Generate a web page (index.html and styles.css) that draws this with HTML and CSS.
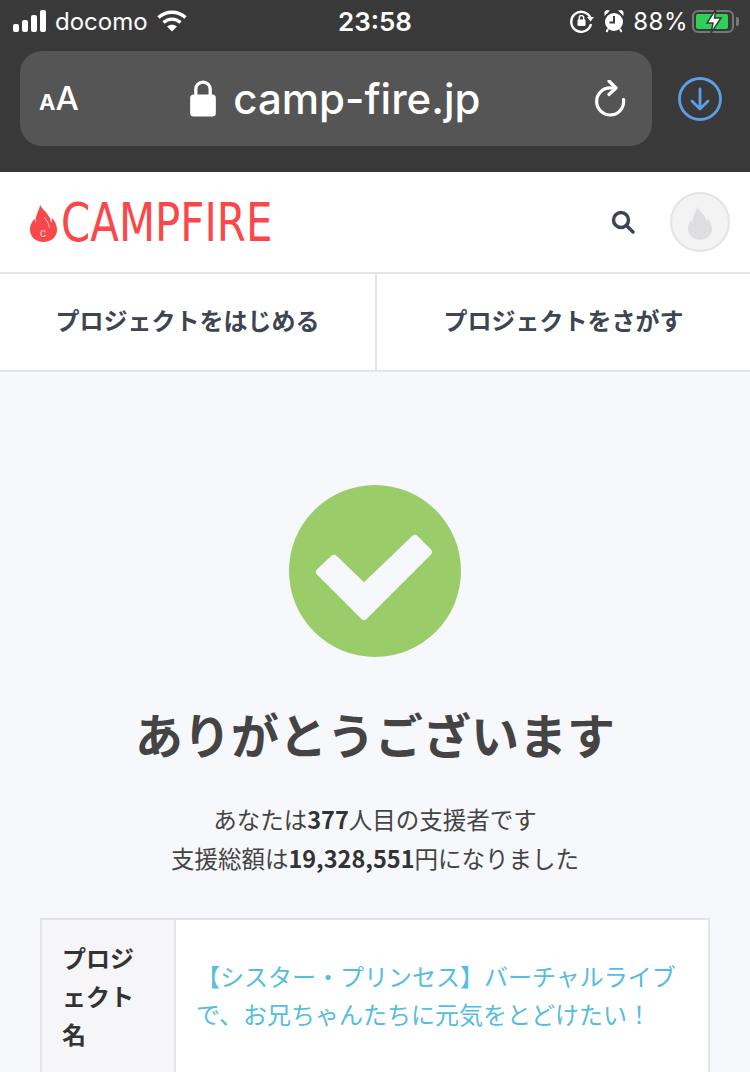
FILE: index.html
```html
<!DOCTYPE html>
<html lang="ja">
<head>
<meta charset="UTF-8" />
<title>CAMPFIRE</title>
<link rel="stylesheet" href="styles.css">
</head>
<body>
  <div class="browser">
    <div class="status">
      <div class="status-left">
        <svg class="signal" width="34" height="22" viewBox="0 0 34 22"><rect x="0" y="14" width="6" height="8" rx="2"/><rect x="9" y="10" width="6" height="12" rx="2"/><rect x="18" y="5" width="6" height="17" rx="2"/><rect x="27" y="0" width="6" height="22" rx="2"/></svg>
        <span class="carrier">docomo</span>
        <svg class="wifi" width="30" height="22" viewBox="0 0 30 22" fill="none" stroke="#fff" stroke-width="3.4"><path d="M1.5 7.5C9 .5 21 .5 28.500 7.5"/><path d="M6.500 12.500c5-4.500 12-4.500 17 0"/><path d="M15 21.500l-5-5c3-2.400 7-2.400 10 0z" fill="#fff" stroke="none"/></svg>
      </div>
      <span class="clock">23:58</span>
      <div class="status-right">
        <svg width="24" height="24" viewBox="0 0 24 24" fill="none" stroke="#fff" stroke-width="2.4"><path d="M20.500 9A10 10 0 1 0 21 15"/><path d="M17 8h7l-3.500 4.500z" fill="#fff" stroke="none"/><rect x="7.500" y="10.500" width="8" height="6.500" rx="1" fill="#fff" stroke="none"/><path d="M9.300 11V8.800a2.200 2.200 0 0 1 4.400 0V11" stroke-width="1.500"/></svg>
        <svg class="alarm" width="20" height="24" viewBox="0 0 20 24"><circle cx="10" cy="13" r="9" fill="#fff"/><path d="M0.500 7L6 1.500 2.500 1 0.500 3zM19.500 7L14 1.500 17.500 1 19.500 3z" fill="#fff"/><path d="M10 7v6.500H5.500" fill="none" stroke="#393939" stroke-width="2"/><path d="M4 20l-1.500 3M16 20l1.500 3" stroke="#fff" stroke-width="2"/></svg>
        <span class="percent">88%</span>
        <div class="battery">
          <div class="battery-fill"></div>
          <svg class="bolt" width="18" height="26" viewBox="0 0 18 26"><path d="M11 1L2 15h6l-2 10 10-15h-6.500z" fill="#fff" stroke="#393939" stroke-width="1.500"/></svg>
        </div>
        <div class="battery-cap"></div>
      </div>
    </div>
    <div class="toolbar">
      <div class="address">
        <span class="aa"><small>A</small>A</span>
        <div class="url">
          <svg width="28" height="37" viewBox="0 0 26 36"><path d="M6 16V9a7 7 0 0 1 14 0v7" fill="none" stroke="#fff" stroke-width="3.200"/><rect x="0.500" y="14" width="25" height="21.500" rx="3.500" fill="#fff"/></svg>
          <span>camp-fire.jp</span>
        </div>
        <svg class="reload" width="32" height="38" viewBox="0 0 32 38" fill="none" stroke="#fff" stroke-width="3.200" stroke-linecap="round" stroke-linejoin="round"><path d="M28.500 19.500A13.500 13.500 0 1 1 16 8h3"/><path d="M14 1l7 7-7 6.500"/></svg>
      </div>
      <svg class="download" width="44" height="44" viewBox="0 0 44 44" fill="none" stroke="#5e9de8" stroke-width="2.800" stroke-linecap="round" stroke-linejoin="round"><circle cx="22" cy="22" r="20.500"/><path d="M22 12v19M14 24l8 8 8-8"/></svg>
    </div>
  </div>

  <header class="site-header">
    <a class="logo">
      <svg width="27" height="40" viewBox="0 0 27 40"><path d="M10 0C9 5 15 8 18 13c2 3 3 5 3 8 1-2 1-3 1-5 3 3 5 7 5 12 0 7-6 12-13.500 12S0 35 0 28c0-5 2-9 5-11 0 2 0 3 1 4C4 13 11 8 10 0z" fill="#f9484a"/><path d="M14 15c3 3 5 7 5.500 11" fill="none" stroke="#ffb3b3" stroke-width="1"/><text class="flame-c" x="13" y="35">c</text></svg>
      <span class="logo-text">CAMPFIRE</span>
    </a>
    <div class="header-right">
      <svg class="search" width="24" height="24" viewBox="0 0 24 24" fill="none" stroke="#3d4552" stroke-width="3.400" stroke-linecap="round"><circle cx="10" cy="10" r="7.500"/><path d="M16 16l6 6"/></svg>
      <div class="avatar">
        <svg width="24" height="36" viewBox="0 0 27 40"><path d="M10 0C9 5 15 8 18 13c2 3 3 5 3 8 1-2 1-3 1-5 3 3 5 7 5 12 0 7-6 12-13.500 12S0 35 0 28c0-5 2-9 5-11 0 2 0 3 1 4C4 13 11 8 10 0z" fill="#dedee1"/></svg>
      </div>
    </div>
  </header>

  <nav class="site-nav">
    <a class="nav-item">プロジェクトをはじめる</a>
    <a class="nav-item">プロジェクトをさがす</a>
  </nav>

  <main class="thanks">
    <div class="check">
      <svg class="check-mark" width="120" height="90" viewBox="0 0 120 90"><path d="M5 39L19 26 49 55 100 6 113 19 49 83z" fill="#f7f8fc" stroke="#f7f8fc" stroke-width="8" stroke-linejoin="round"/></svg>
    </div>
    <h1>ありがとうございます</h1>
    <p class="summary">あなたは<b>377</b>人目の支援者です<br>支援総額は<b>19,328,551</b>円になりました</p>
    <div class="detail">
      <div class="detail-label">プロジェクト名</div>
      <div class="detail-value"><a>【シスター・プリンセス】バーチャルライブで、お兄ちゃんたちに元気をとどけたい！</a></div>
    </div>
  </main>
</body>
</html>
```

FILE: styles.css
```css
* {
  box-sizing: border-box;
}
html, body {
  height: 1072px;
  overflow: hidden;
}
body {
  margin: 0;
  background: #f7f8fc;
  font-family: "Noto Sans CJK JP", "Noto Sans", sans-serif;
  color: #3d3d3d;
}

/* Safari chrome */
.browser {
  height: 172px;
  background: #393939;
  color: #fff;
  font-family: Inter, "Liberation Sans", sans-serif;
}
.status {
  height: 51px;
  padding: 0 11px 9px 13px;
  display: flex;
  align-items: center;
  justify-content: space-between;
  position: relative;
}
.status-left, .status-right {
  display: flex;
  align-items: center;
}
.signal {
  fill: #fff;
  margin-right: 8px;
}
.carrier {
  font-size: 24px;
  margin-right: 9px;
}
.clock {
  position: absolute;
  left: 0;
  right: 0;
  text-align: center;
  font-size: 26px;
  font-weight: 600;
}
.status-right svg {
  flex: none;
}
.alarm {
  margin-left: 10px;
}
.percent {
  font-size: 24px;
  margin-left: 9px;
  margin-right: 4px;
  letter-spacing: 0.5px;
}
.battery {
  width: 42px;
  height: 23px;
  border: 2px solid #777;
  border-radius: 6px;
  padding: 2px;
  position: relative;
}
.battery-fill {
  width: 94%;
  height: 100%;
  background: #2ed158;
  border-radius: 2px;
}
.bolt {
  position: absolute;
  left: 11px;
  top: -4px;
}
.battery-cap {
  width: 3px;
  height: 9px;
  margin-left: 2px;
  background: #777;
  border-radius: 0 2px 2px 0;
}
.toolbar {
  display: flex;
  align-items: center;
  padding: 0 28px 0 20px;
  justify-content: space-between;
}
.address {
  width: 632px;
  height: 95px;
  background: #555;
  border-radius: 22px;
  display: flex;
  align-items: center;
  padding: 0 25px 0 19px;
  position: relative;
}
.aa {
  font-size: 33px;
  font-weight: 500;
  line-height: 1;
}
.aa small {
  font-size: 22px;
  font-weight: 700;
}
.url {
  flex: 1;
  display: flex;
  align-items: center;
  justify-content: center;
  gap: 16px;
  font-size: 42px;
  font-weight: 500;
  padding-right: 4px;
}
.url svg {
  flex: none;
}

/* Site header */
.site-header {
  height: 102px;
  background: #fff;
  border-bottom: 2px solid #e3e3e8;
  display: flex;
  align-items: center;
  justify-content: space-between;
  padding: 0 20px 0 30px;
}
.logo {
  display: flex;
  align-items: center;
  gap: 4px;
}
.flame-c {
  font-family: "Liberation Sans", sans-serif;
  font-size: 13px;
  fill: #ffc9c9;
  text-anchor: middle;
}
.logo-text {
  display: block;
  width: 210px;
  font-family: "DejaVu Sans", sans-serif;
  font-size: 54px;
  line-height: 60px;
  margin-top: 2px;
  color: #f9484a;
  transform: scaleX(0.776);
  transform-origin: left center;
  white-space: nowrap;
}
.header-right {
  display: flex;
  align-items: center;
  gap: 35px;
}
.avatar {
  width: 60px;
  height: 60px;
  border-radius: 50%;
  border: 2px solid #e4e4e7;
  background: #f3f3f4;
  display: flex;
  align-items: center;
  justify-content: center;
}

/* Nav */
.site-nav {
  height: 98px;
  display: flex;
  background: #fff;
  border-bottom: 2px solid #e3e3e8;
}
.nav-item {
  width: 375px;
  flex: none;
  display: flex;
  align-items: center;
  justify-content: center;
  padding-bottom: 5px;
  font-size: 24px;
  font-weight: bold;
  color: #3d4552;
}
.nav-item + .nav-item {
  border-left: 2px solid #e3e3e8;
}

/* Thanks */
.thanks {
  padding: 113px 40px 0;
  text-align: center;
}
.check {
  width: 172px;
  height: 172px;
  margin: 0 auto;
  border-radius: 50%;
  background: #9bcc6a;
  display: flex;
  align-items: center;
  justify-content: center;
}
.check-mark {
  margin-top: 14px;
}
h1 {
  margin: 43px 0 0;
  font-size: 48px;
  line-height: 66px;
  font-weight: bold;
  color: #444;
}
.summary {
  margin: 34px 0 0;
  font-size: 23.5px;
  line-height: 39px;
  color: #444;
}
.summary b {
  color: #333;
}
.detail {
  margin-top: 40px;
  display: flex;
  background: #fff;
  border: 2px solid #e3e3e8;
  border-bottom: 0;
  text-align: left;
  height: 154px;
}
.detail-label {
  width: 134px;
  padding: 19px 20px;
  background: #f6f6f8;
  border-right: 2px solid #e3e3e8;
  font-size: 24px;
  line-height: 38px;
  font-weight: bold;
  color: #333;
}
.detail-value {
  flex: 1;
  padding: 37px 20px;
  font-size: 24px;
  line-height: 38px;
  color: #55bde0;
}
```
